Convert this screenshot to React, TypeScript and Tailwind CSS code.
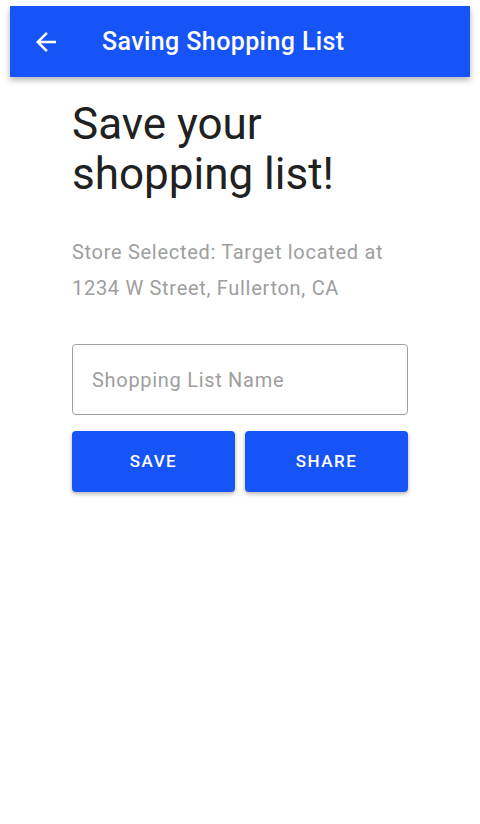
const BackArrow = () => (
  <svg width="30" height="30" viewBox="0 0 24 24" fill="white">
    <path d="M20 11H7.83l5.59-5.59L12 4l-8 8 8 8 1.41-1.41L7.83 13H20v-2z" />
  </svg>
);

const App = () => {
  return (
    <div className="min-h-[824px] w-[480px] bg-white font-['Roboto',sans-serif]">
      <div className="px-[10px] pt-[6px]">
        <div className="flex h-[71px] items-center bg-[#1754f8] pl-[21px] shadow-[0_3px_6px_rgba(0,0,0,0.3)]">
          <BackArrow />
          <h1 className="ml-[41px] text-[25px] font-medium tracking-[0.4px] text-white">Saving Shopping List</h1>
        </div>
      </div>

      <div className="mx-[72px] mt-[22px] w-[336px]">
        <h2 className="text-[44px] leading-[50px] text-[#212121]">
          Save your
          <br />
          shopping list!
        </h2>

        <p className="mt-[35px] text-[20px] leading-[36px] tracking-[0.7px] text-[#9e9e9e]">
          Store Selected: Target located at 1234 W Street, Fullerton, CA
        </p>

        <input
          type="text"
          placeholder="Shopping List Name"
          className="mt-[38px] h-[71px] w-full rounded-[4px] border border-[#9e9e9e] px-[19px] text-[20px] tracking-[0.7px] text-[#212121] outline-none placeholder:text-[#9e9e9e]"
        />

        <div className="mt-[16px] grid grid-cols-2 gap-[10px]">
          <button className="h-[61px] rounded-[4px] bg-[#1754f8] text-[17px] font-medium tracking-[1.5px] text-white shadow-[0_2px_4px_rgba(0,0,0,0.3)]">
            SAVE
          </button>
          <button className="h-[61px] rounded-[4px] bg-[#1754f8] text-[17px] font-medium tracking-[1.5px] text-white shadow-[0_2px_4px_rgba(0,0,0,0.3)]">
            SHARE
          </button>
        </div>
      </div>
    </div>
  );
};

export default App;
